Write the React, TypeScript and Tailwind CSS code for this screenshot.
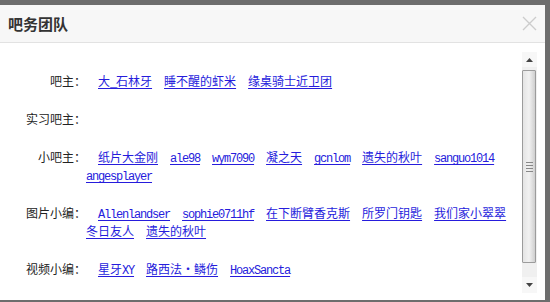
import type React from "react"

const rows: { label: string; links: string[] }[] = [
  { label: "吧主：", links: ["大_石林牙", "睡不醒的虾米", "缘桌骑士近卫团"] },
  { label: "实习吧主：", links: [] },
  {
    label: "小吧主：",
    links: ["纸片大金刚", "ale98", "wym7090", "凝之天", "gcnlom", "遗失的秋叶", "sanguo1014", "angesplayer"],
  },
  {
    label: "图片小编：",
    links: ["Allenlandser", "sophie0711hf", "在下断臂香克斯", "所罗门钥匙", "我们家小翠翠", "冬日友人", "遗失的秋叶"],
  },
  { label: "视频小编：", links: ["星牙XY", "路西法·鳞伤", "HoaxSancta"] },
]

// latin runs get the narrow mono face, like the old bitmap font
const runs = (s: string) =>
  s
    .split(/([\x20-\x7e]+)/)
    .filter(Boolean)
    .map((p, i) =>
      /^[\x20-\x7e]+$/.test(p) ? (
        <span key={i} className="font-['Liberation_Mono',monospace] tracking-[-1.2px] leading-none">
          {p}
        </span>
      ) : (
        <span key={i}>{p}</span>
      )
    )

const Scrollbar: React.FC = () => (
  <div className="w-[15px] shrink-0 flex flex-col bg-[#f0f0f0]">
    <div className="h-[15px] flex items-center justify-center bg-[#f7f7f7]">
      <svg width="7" height="4" viewBox="0 0 7 4">
        <path d="M3.5 0 L7 4 L0 4 Z" fill="#444" />
      </svg>
    </div>
    <div className="h-[3px]" />
    <div className="h-[193px] mr-[1px] border border-[#9c9c9c] rounded-[1px] bg-gradient-to-r from-[#e4e4e4] via-[#f2f2f2] to-[#cfcfcf] flex items-center justify-center">
      <div className="flex flex-col gap-[2px]">
        <div className="w-[7px] h-[1px] bg-[#888]" />
        <div className="w-[7px] h-[1px] bg-[#888]" />
        <div className="w-[7px] h-[1px] bg-[#888]" />
        <div className="w-[7px] h-[1px] bg-[#888]" />
      </div>
    </div>
    <div className="flex-1" />
    <div className="h-[16px] flex items-center justify-center bg-[#f7f7f7]">
      <svg width="7" height="4" viewBox="0 0 7 4">
        <path d="M0 0 L7 0 L3.5 4 Z" fill="#444" />
      </svg>
    </div>
  </div>
)

const App: React.FC = () => {
  return (
    <div className="w-[550px] h-[302px] bg-[#6d6d6d] pt-[5px] overflow-hidden font-['Noto_Sans_CJK_SC',sans-serif]">
      <div className="w-[545px] h-[295px] bg-white flex flex-col">
        <div className="h-[38px] shrink-0 bg-[#f7f7f7] border-b border-[#e2e2e2] flex items-center justify-between pl-[8px] pr-[8px]">
          <h3 className="text-[15px] font-bold text-[#333] leading-none">吧务团队</h3>
          <svg width="15" height="15" viewBox="0 0 15 15">
            <path d="M1 1 L14 14 M14 1 L1 14" stroke="#cccccc" strokeWidth="1.4" />
          </svg>
        </div>

        <div className="flex-1 flex pt-[9px] pb-[7px] pr-[8px] min-h-0">
          <div className="flex-1 flex flex-col gap-[20px] pt-[20px] text-[12px] leading-[18px]">
            {rows.map((row) => (
              <div key={row.label} className="flex">
                <div className="w-[60px] ml-[26px] shrink-0 text-right text-[#222] h-[18px]">{row.label}</div>
                <div className="flex-1 flex flex-wrap min-h-[18px]">
                  {row.links.map((l, i) => (
                    <a
                      key={i}
                      href="#"
                      className={`${i === 0 ? "ml-[12px]" : ""} mr-[12px] h-[18px] whitespace-nowrap text-[#261cdc] underline underline-offset-[2px]`}
                    >
                      {runs(l)}
                    </a>
                  ))}
                </div>
              </div>
            ))}
          </div>
          <Scrollbar />
        </div>
      </div>
    </div>
  )
}

export default App
